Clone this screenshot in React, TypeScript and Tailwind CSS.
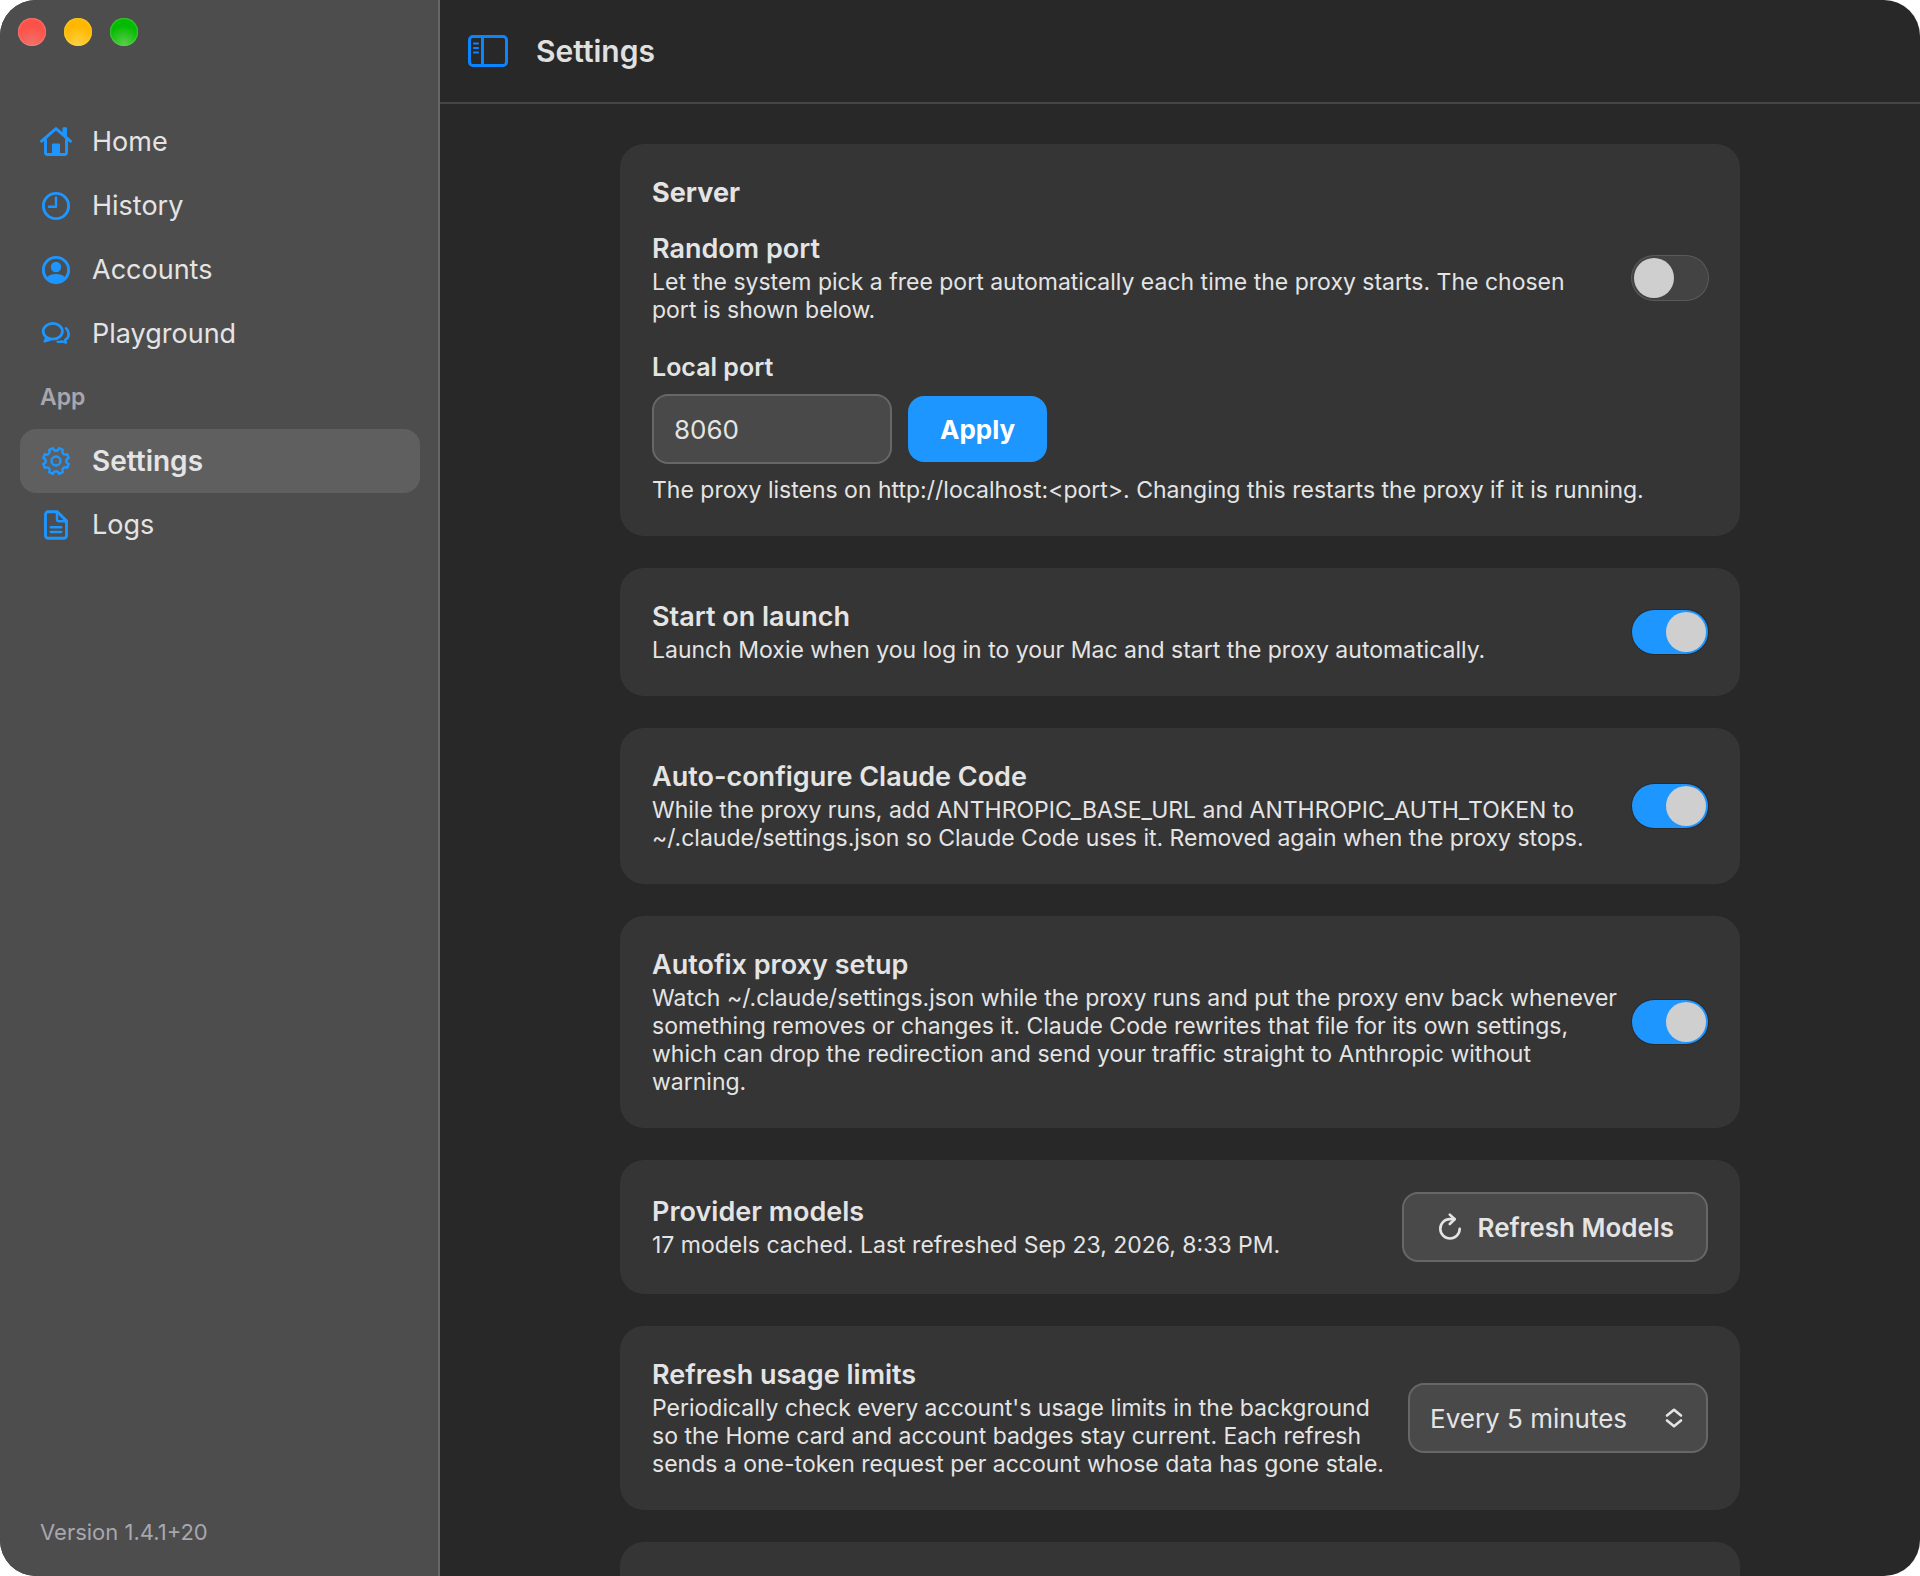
import { useId, useState } from "react";
import type { ReactNode } from "react";

const icons = {
  home: (
    <>
      <path d="M5.500 14V26.500a2 2 0 0 0 2 2h17a2 2 0 0 0 2-2V14" />
      <path d="M1.600 15.200 16 2.600l14.400 12.600" />
      <path d="M22.500 2.500a1.200 1.200 0 0 1 1.200-1.200h2.100A1.200 1.200 0 0 1 27 2.500v9l-4.500-4z" fill="currentColor" stroke="none" />
      <path d="M12 29V18.500a1 1 0 0 1 1-1h6a1 1 0 0 1 1 1V29z" fill="currentColor" stroke="none" />
    </>
  ),
  history: (
    <>
      <circle cx="16" cy="16" r="12.600" />
      <path d="M16 7.500V16.800H9" strokeWidth="2.400" />
    </>
  ),
  accounts: (
    <>
      <circle cx="16" cy="16" r="12.600" />
      <circle cx="16" cy="13" r="5.200" fill="currentColor" stroke="none" />
      <path d="M6.500 23.500c2.300-2.500 5.800-3.500 9.500-3.500s7.200 1 9.500 3.500c-2.300 3.500-5.500 5.200-9.500 5.200s-7.200-1.700-9.500-5.200z" fill="currentColor" stroke="none" />
    </>
  ),
  playground: (
    <>
      <ellipse cx="12.800" cy="13.300" rx="9.600" ry="7.900" strokeWidth="2.700" />
      <path d="M5.800 19.500 4.300 23.800l5.700-1.500z" fill="currentColor" strokeWidth="1.600" />
      <path d="M26 10.300c1.700 1.500 2.700 3.400 2.700 5.600 0 2.500-1.300 4.600-3.300 6" strokeWidth="2.600" />
      <path d="M17.500 23.800c1.700.3 3.500.1 5-.4 1.100.7 2.200 1.100 3.600 1.200-.6-.8-.9-1.700-.9-2.600" strokeWidth="2.200" />
    </>
  ),
  settings: (
    <>
      <circle cx="16" cy="16" r="4.500" strokeWidth="2.400" />
      <path
        strokeWidth="2.400"
        d="M12.900 3.200Q14 5.800 16 5.800T19.100 3.200L22.800 4.800Q21.700 7.400 23.200 8.800T27.200 9.200L28.800 12.900Q26.200 14 26.200 16T28.800 19.100L27.200 22.800Q24.600 21.700 23.200 23.200T22.800 27.200L19.100 28.800Q18 26.200 16 26.200T12.900 28.800L9.200 27.200Q10.300 24.600 8.800 23.200T4.800 22.800L3.200 19.100Q5.800 18 5.800 16T3.200 12.900L4.800 9.200Q7.400 10.300 8.800 8.800T9.200 4.800z"
      />
    </>
  ),
  logs: (
    <>
      <path d="M8.300 2.700h9l9.200 9.200v14.600a2.800 2.800 0 0 1-2.800 2.800H8.300a2.800 2.800 0 0 1-2.800-2.800v-21a2.800 2.800 0 0 1 2.800-2.800z" />
      <path d="M17 3v7.500a1.800 1.800 0 0 0 1.800 1.800H26M10.800 18.300h10.400M10.800 23h10.400" strokeWidth="2.400" />
    </>
  ),
};

function NavItem({
  icon,
  label,
  active = false,
}: {
  icon: keyof typeof icons;
  label: string;
  active?: boolean;
}) {
  return (
    <a
      href={"#" + label.toLowerCase()}
      aria-current={active ? "page" : undefined}
      className={
        active
          ? "flex h-16 items-center gap-5 rounded-2xl bg-[#5f5f5f] px-5 text-[28px] font-semibold"
          : "flex h-16 items-center gap-5 rounded-2xl px-5 text-[27px]"
      }
    >
      <svg
        aria-hidden="true"
        viewBox="0 0 32 32"
        className="size-8 shrink-0 text-[#1e96ff]"
        fill="none"
        stroke="currentColor"
        strokeWidth="2.900"
        strokeLinecap="round"
        strokeLinejoin="round"
      >
        {icons[icon]}
      </svg>
      {label}
    </a>
  );
}

function Sidebar() {
  return (
    <aside className="flex w-[440px] shrink-0 flex-col border-r-2 border-[#666666] bg-[#4d4d4d]">
      <div className="flex gap-[18px] px-[18px] pt-[18px]">
        <button
          aria-label="Close"
          className="size-7 rounded-full bg-[radial-gradient(circle_at_50%_90%,#f0706a,#fc5148_60%)] shadow-[inset_0_0_2px_#ffb0a8]"
        />
        <button
          aria-label="Minimize"
          className="size-7 rounded-full bg-[radial-gradient(circle_at_50%_90%,#ffd040,#ffb700_60%)] shadow-[inset_0_0_2px_#fff050]"
        />
        <button
          aria-label="Zoom"
          className="size-7 rounded-full bg-[radial-gradient(circle_at_50%_90%,#58cc48,#04bb02_60%)] shadow-[inset_0_0_2px_#80f070]"
        />
      </div>
      <nav className="mt-16 pl-5 pr-[18px]">
        <NavItem icon="home" label="Home" />
        <NavItem icon="history" label="History" />
        <NavItem icon="accounts" label="Accounts" />
        <NavItem icon="playground" label="Playground" />
        <h2 className="px-5 text-[23px] font-semibold leading-[63px] text-[#a8a6ae]">
          App
        </h2>
        <NavItem icon="settings" label="Settings" active />
        <NavItem icon="logs" label="Logs" />
      </nav>
      <p className="mt-auto px-10 pb-7 text-[22px] leading-8 text-[#a8a6ae]">
        Version 1.4.1+20
      </p>
    </aside>
  );
}

function Switch({ id, defaultChecked }: { id: string; defaultChecked: boolean }) {
  return (
    <input
      id={id}
      type="checkbox"
      role="switch"
      defaultChecked={defaultChecked}
      className="h-11 w-[76px] shrink-0 appearance-none rounded-full bg-[#434343] p-0.5 ring-1 ring-[#5a5a5a] before:block before:size-10 before:rounded-full before:bg-[#cfcfcf] checked:bg-[#1e96ff] checked:ring-[#2a2a2a] checked:before:ml-8"
    />
  );
}

function Setting({
  title,
  description,
  htmlFor,
  children,
}: {
  title: string;
  description: string;
  htmlFor?: string;
  children: ReactNode;
}) {
  return (
    <div className="flex items-center justify-between gap-2.5">
      <div>
        <label
          htmlFor={htmlFor}
          className="block text-[27px] font-semibold leading-[34px]"
        >
          {title}
        </label>
        <p className="mt-0.5 text-[23px] leading-7">{description}</p>
      </div>
      {children}
    </div>
  );
}

function ToggleSetting({
  title,
  description,
  defaultChecked = true,
}: {
  title: string;
  description: string;
  defaultChecked?: boolean;
}) {
  const id = useId();
  return (
    <Setting title={title} description={description} htmlFor={id}>
      <Switch id={id} defaultChecked={defaultChecked} />
    </Setting>
  );
}

function Card({ children }: { children?: ReactNode }) {
  return (
    <section className="rounded-3xl bg-[#353535] p-8">{children}</section>
  );
}

function ServerCard() {
  const [port, setPort] = useState("8060");
  return (
    <Card>
      <h2 className="mb-[22px] text-[27px] font-bold leading-[34px]">Server</h2>
      <ToggleSetting
        title="Random port"
        description={
          "Let the system pick a free port automatically each time the proxy starts. The chosen port\u00a0is shown below."
        }
        defaultChecked={false}
      />
      <form className="mt-7" onSubmit={(event) => event.preventDefault()}>
        <label
          htmlFor="port"
          className="block text-[25px] font-semibold leading-[30px]"
        >
          Local port
        </label>
        <div className="mt-3 flex items-center gap-4">
          <input
            id="port"
            value={port}
            onChange={(event) => setPort(event.target.value)}
            className="h-[70px] w-60 rounded-2xl border-2 border-[#676767] bg-[#494949] px-5 text-[26px]"
          />
          <button
            type="submit"
            className="h-[66px] rounded-2xl bg-[#1e96ff] px-8 text-[26px] font-bold text-white"
          >
            Apply
          </button>
        </div>
      </form>
      <p className="mt-3 text-[23px] leading-7">
        The proxy listens on http://localhost:&lt;port&gt;. Changing this
        restarts the proxy if it is running.
      </p>
    </Card>
  );
}

export default function App() {
  return (
    <div className="h-screen bg-white">
      <div className="flex h-full overflow-hidden rounded-[36px] bg-[#282828] font-[Inter,sans-serif] text-[#e4e4e4]">
        <Sidebar />
        <div className="flex min-w-0 flex-1 flex-col">
          <header className="flex h-[104px] shrink-0 items-center gap-7 border-b-2 border-[#454545] px-7">
            <button aria-label="Toggle sidebar">
              <svg
                viewBox="0 0 40 32"
                className="h-8 w-10 text-[#0a84ff]"
                fill="none"
                stroke="currentColor"
                strokeLinecap="round"
              >
                <rect x="1.500" y="1.500" width="37" height="29" rx="3.500" strokeWidth="3" />
                <path d="M14.500 2v28" strokeWidth="3" />
                <path d="M6 8.500h4M6 13h4M6 17.500h4" strokeWidth="2.200" />
              </svg>
            </button>
            <h1 className="text-[30px] font-semibold text-[#e0e0e0]">
              Settings
            </h1>
          </header>
          <main className="flex-1 overflow-y-auto px-10 py-10 [scrollbar-width:none]">
            <div className="mx-auto flex max-w-[1120px] flex-col gap-8">
              <ServerCard />
              <Card>
                <ToggleSetting
                  title="Start on launch"
                  description="Launch Moxie when you log in to your Mac and start the proxy automatically."
                />
              </Card>
              <Card>
                <ToggleSetting
                  title="Auto-configure Claude Code"
                  description="While the proxy runs, add ANTHROPIC_BASE_URL and ANTHROPIC_AUTH_TOKEN to ~/.claude/settings.json so Claude Code uses it. Removed again when the proxy stops."
                />
              </Card>
              <Card>
                <ToggleSetting
                  title="Autofix proxy setup"
                  description="Watch ~/.claude/settings.json while the proxy runs and put the proxy env back whenever something removes or changes it. Claude Code rewrites that file for its own settings, which can drop the redirection and send your traffic straight to Anthropic without warning."
                />
              </Card>
              <Card>
                <Setting
                  title="Provider models"
                  description="17 models cached. Last refreshed Sep 23, 2026, 8:33 PM."
                  htmlFor="refresh-models"
                >
                  <button
                    id="refresh-models"
                    aria-label="Refresh Models"
                    className="flex h-[70px] shrink-0 items-center gap-3.5 rounded-2xl border-2 border-[#676767] bg-[#494949] px-8 text-[26px] font-semibold"
                  >
                    <svg
                      aria-hidden="true"
                      viewBox="0 0 28 28"
                      className="size-7"
                      fill="none"
                      stroke="currentColor"
                      strokeWidth="2.600"
                      strokeLinecap="round"
                      strokeLinejoin="round"
                    >
                      <path d="M23.700 15.800A9.700 9.700 0 1 1 14 6.100h4.500" />
                      <path d="M13.800 1.600 18.700 6.200 13.800 11" />
                    </svg>
                    Refresh Models
                  </button>
                </Setting>
              </Card>
              <Card>
                <Setting
                  title="Refresh usage limits"
                  description="Periodically check every account's usage limits in the background so the Home card and account badges stay current. Each refresh sends a one-token request per account whose data has gone stale."
                  htmlFor="refresh-interval"
                >
                  <div className="relative shrink-0">
                    <select
                      id="refresh-interval"
                      className="h-[70px] w-[300px] appearance-none rounded-2xl border-2 border-[#676767] bg-[#494949] px-5 text-[26px]"
                    >
                      <option>Every 5 minutes</option>
                      <option>Every 15 minutes</option>
                      <option>Every hour</option>
                    </select>
                    <svg
                      aria-hidden="true"
                      viewBox="0 0 20 20"
                      className="pointer-events-none absolute right-6 top-[25px] size-5"
                      fill="none"
                      stroke="currentColor"
                      strokeWidth="2.600"
                      strokeLinecap="round"
                      strokeLinejoin="round"
                    >
                      <path d="m3 7.500 7-5.700 7 5.700M3 12.500l7 5.700 7-5.700" />
                    </svg>
                  </div>
                </Setting>
              </Card>
              <Card />
            </div>
          </main>
        </div>
      </div>
    </div>
  );
}
